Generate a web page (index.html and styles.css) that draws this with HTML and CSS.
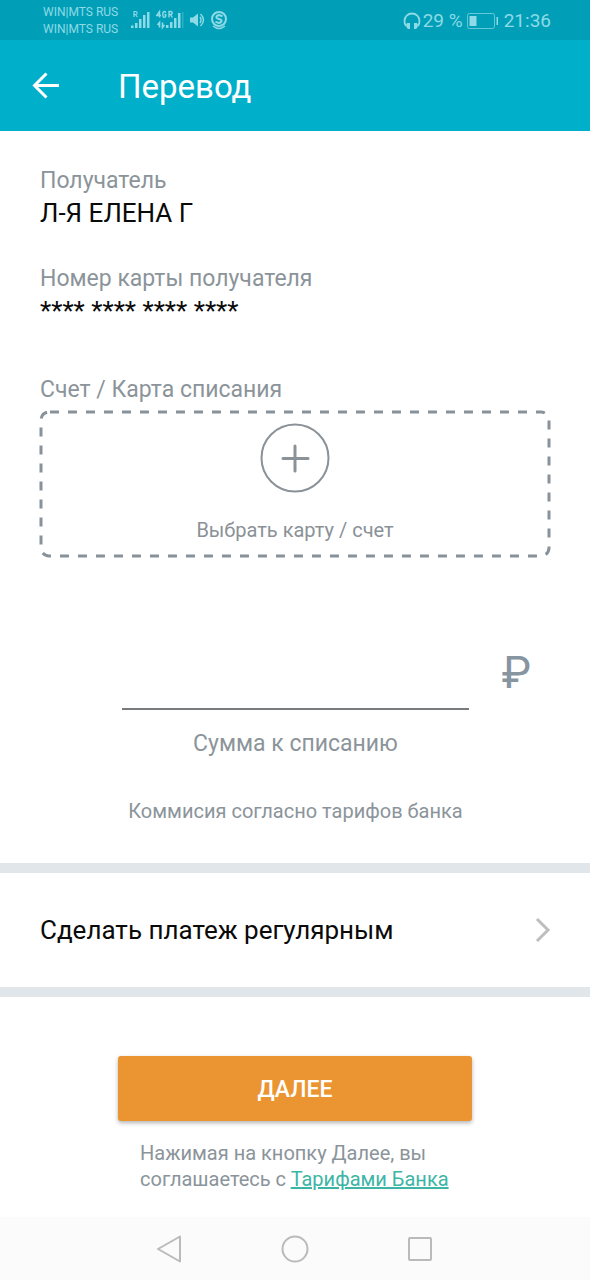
FILE: index.html
```html
<!DOCTYPE html>
<html lang="ru">
<head>
<meta charset="utf-8">
<meta name="viewport" content="width=device-width, initial-scale=1">
<title>Перевод</title>
<link rel="stylesheet" href="styles.css">
</head>
<body>
<div class="status">
  <div class="carriers"><span>WIN|MTS RUS</span><span>WIN|MTS RUS</span></div>
  <div class="status-icons">
    <svg width="20" height="20" viewBox="0 0 20 20" fill="currentColor" aria-hidden="true">
      <path d="M0 15.500h2.500V18H0zM4 13h2.500v5H4zM8 9h2.500v9H8zM12 5h2.500v13H12zM16 2h2.500v16H16z"/>
      <path d="M3 7V1.500h1.500q1.700 0 1.700 1.500T4.500 4.500H3M4.500 4.500 6.300 7" fill="none" stroke="currentColor" stroke-width="1.200"/>
    </svg>
    <svg width="28" height="20" viewBox="0 0 28 20" fill="currentColor" aria-hidden="true">
      <path d="M10 15h2.500v3H10zM14 12h2.500v6H14zM18 8h2.500v10H18zM22 3h2.500v15H22z"/>
      <path d="M26 2h1.500v16H26z" opacity=".3"/>
      <path d="M3.500 7.500V1.500L.700 5.500H5M9.800 3Q9.500 1.500 8.300 1.500 6.800 1.500 6.800 4.500T8.300 7.300Q9.800 7.300 9.800 6V4.700H8.400M13 7.500v-6h1.600q1.600 0 1.600 1.500t-1.600 1.500H13M14.600 4.500 16.300 7.500" fill="none" stroke="currentColor" stroke-width="1.400"/>
      <path d="M3.500 17.500v-5L1.500 15M6.500 12.500v5L8.500 15" fill="none" stroke="currentColor" stroke-width="1.600"/>
    </svg>
    <svg width="16" height="16" viewBox="0 0 16 16" aria-hidden="true">
      <path d="M1 5.500h3L9 1.500v13L4 10.500H1z" fill="currentColor"/>
      <path d="M11 5q2 3 0 6M11.500 2q6 6 0 12" fill="none" stroke="currentColor" stroke-width="1.400"/>
    </svg>
    <svg width="18" height="20" viewBox="0 0 18 20" fill="none" stroke="currentColor" aria-hidden="true">
      <circle cx="9" cy="9" r="7" stroke-width="2"/>
      <path d="M12.500 6.500Q9 4 7 6T9 9t2 3T5.500 11.500" stroke-width="2"/>
      <path d="M3 16q6 5 12 0" stroke-width="1.600"/>
    </svg>
  </div>
  <div class="status-right">
    <svg width="18" height="18" viewBox="0 0 18 18" aria-hidden="true">
      <path d="M3 14Q1.500 12 1.500 9A7.500 7.500 0 0 1 16.500 9Q16.500 12 15 14" fill="none" stroke="currentColor" stroke-width="1.800"/>
      <path d="M4 11h3v6H5.500Q3 16 3 13zM14 11h-3v6h1.500Q15 16 15 13z" fill="currentColor"/>
    </svg>
    <span>29 %</span>
    <svg class="battery" width="32" height="16" viewBox="0 0 32 16" aria-hidden="true">
      <rect x=".500" y=".500" width="27" height="15" rx="2" fill="none" stroke="currentColor" opacity=".7"/>
      <path d="M2.500 3h7v10h-7zM29.500 4h1.500v8h-1.500z" fill="currentColor"/>
    </svg>
    <span>21:36</span>
  </div>
</div>
<header class="appbar">
  <button class="back" type="button" aria-label="Назад">
    <svg width="28" height="28" viewBox="0 0 28 28" fill="none" stroke="currentColor" stroke-width="3" aria-hidden="true"><path d="M27 13.500H3M14.500 1.500l-12 12 12 12"/></svg>
  </button>
  <h1 class="title">Перевод</h1>
</header>
<main class="main">
  <form class="form">
    <dl class="details">
      <div><dt class="label">Получатель</dt><dd class="value">Л-Я ЕЛЕНА Г</dd></div>
      <div><dt class="label">Номер карты получателя</dt><dd class="value">**** **** **** ****</dd></div>
    </dl>
    <div class="label">Счет / Карта списания</div>
    <button class="picker" type="button">
      <svg class="dashes" aria-hidden="true"><rect class="dash-rect" x="2" y="2" rx="8"/></svg>
      <svg width="70" height="70" viewBox="0 0 70 70" fill="none" stroke="currentColor" aria-hidden="true"><circle cx="35" cy="35" r="33.500" stroke-width="2"/><path d="M35 23v25M23 35.500h25" stroke-width="3" stroke-linecap="round"/></svg>
      <span>Выбрать карту / счет</span>
    </button>
    <div class="amount">
      <input class="amount-input" id="amount" type="text" inputmode="decimal">
      <span class="currency">₽</span>
    </div>
    <label class="label amount-label" for="amount">Сумма к списанию</label>
    <p class="fee">Коммисия согласно тарифов банка</p>
  </form>
  <button class="regular" type="button">
    <span>Сделать платеж регулярным</span>
    <svg width="16" height="26" viewBox="0 0 16 26" fill="none" stroke="#bebebe" stroke-width="3" aria-hidden="true"><path d="M2 2l11 11L2 24"/></svg>
  </button>
  <div class="submit">
    <button class="next" type="button">ДАЛЕЕ</button>
    <p class="terms">Нажимая на кнопку Далее, вы соглашаетесь с <a class="link" href="#">Тарифами Банка</a></p>
  </div>
</main>
<nav class="nav">
  <button class="nav-button" type="button" aria-label="Назад"><svg width="28" height="28" viewBox="0 0 28 28"><path d="M24 1.500v25L2 14z"/></svg></button>
  <button class="nav-button" type="button" aria-label="Домой"><svg width="28" height="28" viewBox="0 0 28 28"><circle cx="14" cy="14" r="12.500"/></svg></button>
  <button class="nav-button" type="button" aria-label="Недавние"><svg width="28" height="28" viewBox="0 0 28 28"><rect x="3" y="3" width="22" height="22" rx="1"/></svg></button>
</nav>
</body>
</html>
```
FILE: styles.css
```css
* { box-sizing: border-box; }

body {
  margin: 0;
  min-height: 100vh;
  display: flex;
  flex-direction: column;
  background: #fff;
  color: #0a0a0a;
  font-family: Roboto, "Noto Sans", sans-serif;
}

button {
  border: 0;
  padding: 0;
  background: none;
  color: inherit;
  font: inherit;
  cursor: pointer;
}

svg { display: block; flex: none; }

.status {
  display: flex;
  align-items: center;
  height: 40px;
  padding: 0 39px 0 43px;
  background: #009fb7;
  color: #8edae6;
}

.carriers {
  display: flex;
  flex-direction: column;
  padding-top: 2px;
  font-size: 12px;
  line-height: 17px;
}

.status-icons {
  display: flex;
  align-items: center;
  gap: 5px;
  margin-left: 13px;
}

.status-right {
  display: flex;
  align-items: center;
  gap: 2px;
  margin-left: auto;
  padding-top: 2px;
  font-size: 19px;
  line-height: 24px;
}

.battery { margin: 0 3px 0 2px; }

.appbar {
  display: flex;
  align-items: center;
  gap: 58px;
  height: 91px;
  padding: 0 32px;
  background: #00afca;
  color: #fff;
}

.title {
  margin: 0;
  padding-top: 2px;
  font-size: 33px;
  line-height: 40px;
  font-weight: 400;
}

.main { display: flex; flex-direction: column; }

.form {
  display: flex;
  flex-direction: column;
  padding: 35px 39px 39px 40px;
}

.details {
  display: grid;
  gap: 33px;
  margin: 0 0 46px;
}

.label {
  color: #8b949a;
  font-size: 23px;
  line-height: 30px;
}

.value {
  margin: 0;
  font-size: 26px;
  line-height: 35px;
}

.picker {
  position: relative;
  display: flex;
  flex-direction: column;
  align-items: center;
  gap: 24px;
  margin: 5px 0 0 -1px;
  padding: 13px 0 15px;
  color: #8a9197;
  font-size: 20px;
  line-height: 26px;
}

.dashes {
  position: absolute;
  inset: 0;
  width: 100%;
  height: 100%;
}

.dash-rect {
  width: calc(100% - 4px);
  height: calc(100% - 4px);
  fill: none;
  stroke: #87929a;
  stroke-width: 3;
  stroke-dasharray: 9;
  stroke-dashoffset: -1;
}

.amount {
  display: flex;
  align-items: center;
  gap: 33px;
  margin: 76px 20px 19px 82px;
}

.amount-input {
  flex: 1;
  min-width: 0;
  height: 76px;
  padding: 0;
  border: 0;
  border-bottom: 2px solid #777b7e;
  border-radius: 0;
  background: none;
  color: inherit;
  font: inherit;
  font-size: 40px;
  text-align: center;
}

.currency {
  padding-top: 2px;
  color: #8795a0;
  font-size: 44px;
  line-height: 52px;
  font-weight: 400;
}

.amount-label { text-align: center; }

.fee {
  margin: 39px 0 0;
  color: #8b949a;
  font-size: 20px;
  line-height: 26px;
  text-align: center;
}

.regular {
  display: flex;
  align-items: center;
  justify-content: space-between;
  height: 134px;
  padding: 0 39px 0 40px;
  border: solid #e1e6ea;
  border-width: 10px 0;
  font-size: 26px;
  line-height: 36px;
}

.submit {
  display: flex;
  flex-direction: column;
  align-items: center;
  padding: 59px 118px 24px;
}

.next {
  width: 100%;
  height: 65px;
  padding-top: 2px;
  border-radius: 3px;
  background: #eb9532;
  box-shadow: 0 2px 4px rgba(0, 0, 0, .3);
  color: #fff;
  font-size: 23px;
  font-weight: 500;
}

.terms {
  max-width: 310px;
  margin: 19px 0 0;
  color: #8b949a;
  font-size: 20px;
  line-height: 26px;
}

.link { color: #3db5a5; }

.nav {
  display: flex;
  align-items: center;
  justify-content: center;
  gap: 97px;
  height: 63px;
  margin-top: auto;
  background: #fbfbfb;
}

.nav-button svg {
  fill: none;
  stroke: #bababa;
  stroke-width: 2;
  stroke-linejoin: round;
}
```
